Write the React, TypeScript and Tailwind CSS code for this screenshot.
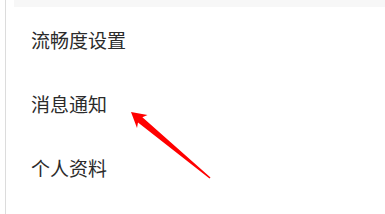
import React from "react";

const items = ["流畅度设置", "消息通知", "个人资料"];

export default function App() {
  return (
    <div className="relative flex h-[214px] w-[385px] overflow-hidden bg-white font-['Noto_Sans_CJK_SC',sans-serif]">
      <div className="ml-[5px] w-px bg-[#dcdcdc]" />
      <div className="ml-[8px] flex flex-1 flex-col">
        <div className="h-[7px] bg-[#f7f7f7]" />
        <ul className="mt-px">
          {items.map((t) => (
            <li key={t} className="flex h-16 items-center pl-[17px] text-[19px] text-[#2b2b2b]">
              {t}
            </li>
          ))}
        </ul>
      </div>
      {/* annotation arrow */}
      <svg className="pointer-events-none absolute left-0 top-0" width="385" height="214">
        <polygon
          points="131,112 147.5,115 142.4,117.2 210.5,177.5 209.5,178.5 138,122.4 137,128"
          fill="#ff0000"
        />
      </svg>
    </div>
  );
}
